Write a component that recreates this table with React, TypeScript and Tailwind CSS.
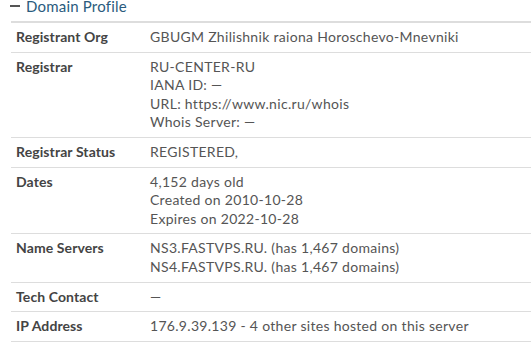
import React from 'react';

const rows: { label: string; lines: string[] }[] = [
  { label: 'Registrant Org', lines: ['GBUGM Zhilishnik raiona Horoschevo-Mnevniki'] },
  {
    label: 'Registrar',
    lines: ['RU-CENTER-RU', 'IANA ID: \u2014', 'URL: https://www.nic.ru/whois', 'Whois Server: \u2014'],
  },
  { label: 'Registrar Status', lines: ['REGISTERED,'] },
  { label: 'Dates', lines: ['4,152 days old', 'Created on 2010-10-28', 'Expires on 2022-10-28'] },
  {
    label: 'Name Servers',
    lines: ['NS3.FASTVPS.RU. (has 1,467 domains)', 'NS4.FASTVPS.RU. (has 1,467 domains)'],
  },
  { label: 'Tech Contact', lines: ['\u2014'] },
  { label: 'IP Address', lines: ['176.9.39.139 - 4 other sites hosted on this server'] },
];

export default function App() {
  return (
    <div className="w-[531px] h-[350px] overflow-hidden bg-white font-['Lato','Liberation_Sans',sans-serif] text-[14px]">
      {/* Section header */}
      <div className="flex items-center h-[14px] -mt-[1px] pl-[10px] gap-[6px] text-[15px] leading-[14px] tracking-[0.2px] text-[#2a5b7d]">
        <span className="block w-[10px] h-[2px] bg-[#555]" />
        <span>Domain Profile</span>
      </div>

      {/* Profile table */}
      <div className="ml-[11px] mt-[8px] border-t-2 border-[#ddd]">
        {rows.map((row) => (
          <div key={row.label} className="flex border-b border-[#ddd] py-[5px] leading-[18.6px]">
            <div className="w-[139px] shrink-0 pl-[5px] font-bold tracking-[0.1px] text-[#444]">{row.label}</div>
            <div className="tracking-[0.3px] text-[#555]">
              {row.lines.map((line) => (
                <div key={line}>{line}</div>
              ))}
            </div>
          </div>
        ))}
      </div>
    </div>
  );
}
